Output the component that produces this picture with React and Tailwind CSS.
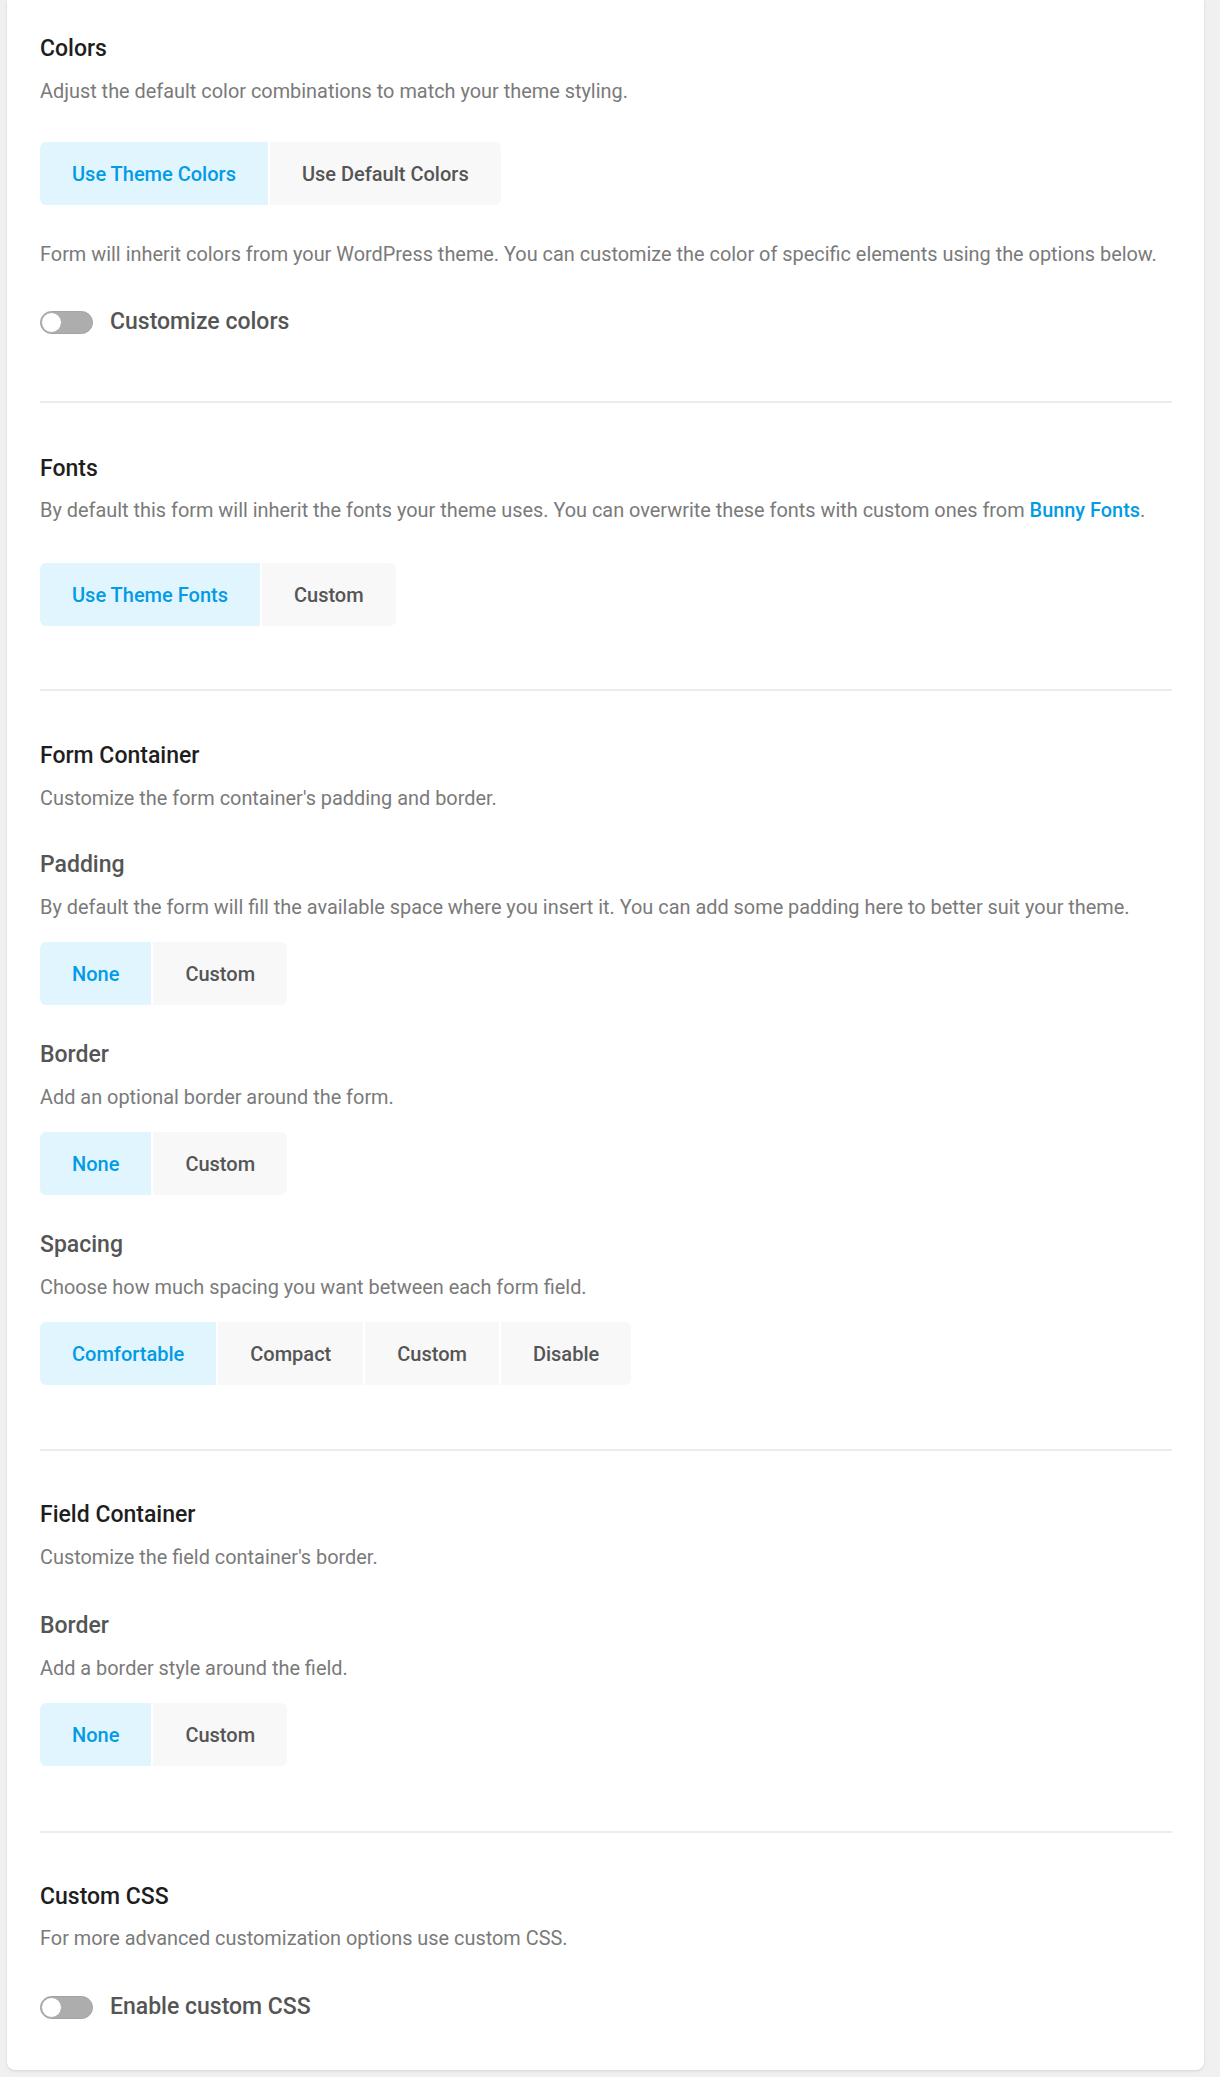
import React from "react";

const font = { fontFamily: "Roboto, 'Noto Sans', sans-serif" };

function Title({ children, className = "" }) {
  return (
    <h2 className={`text-[23px] leading-[30px] font-medium text-[#1e1e1e] ${className}`}>
      {children}
    </h2>
  );
}

function SubTitle({ children, className = "" }) {
  return (
    <h3 className={`text-[23px] leading-[30px] font-medium text-[#555555] ${className}`}>
      {children}
    </h3>
  );
}

function Desc({ children, className = "" }) {
  return (
    <p className={`text-[19.9px] leading-[30px] text-[#7a7a7a] ${className}`}>{children}</p>
  );
}

function ButtonGroup({ options, className = "" }) {
  return (
    <div className={`flex ${className}`}>
      <div className="inline-flex gap-[2px] rounded-md overflow-hidden bg-white">
        {options.map((o, i) => (
          <button
            key={o}
            className={`h-[63px] px-8 text-[20px] font-medium ${
              i === 0 ? "bg-[#e1f5fe] text-[#039be5]" : "bg-[#f8f8f8] text-[#555555]"
            }`}
          >
            {o}
          </button>
        ))}
      </div>
    </div>
  );
}

function Toggle({ label, className = "" }) {
  return (
    <div className={`flex items-center h-[30px] gap-[17px] ${className}`}>
      <div className="relative w-[53px] h-[23px] rounded-full bg-[#adadad] border border-[#a3a3a3]">
        <div className="absolute left-0 top-0 w-[21px] h-[21px] rounded-full bg-white border border-[#a8a8a8]" />
      </div>
      <span className="text-[23px] leading-[30px] font-medium text-[#555555]">{label}</span>
    </div>
  );
}

function Divider({ className = "" }) {
  return <div className={`h-[2px] bg-[#ececec] ${className}`} />;
}

export default function App() {
  return (
    <div className="min-h-[2077px] bg-[#f0f0f0] pb-[6px]" style={font}>
      <div className="ml-[7px] w-[1197px] bg-white rounded-b-lg shadow-[0_1px_3px_rgba(0,0,0,0.12)] pl-[33px] pr-[32px] pt-[34px] pb-[48px]">
        {/* Colors */}
        <Title>Colors</Title>
        <Desc className="mt-[13px]">Adjust the default color combinations to match your theme styling.</Desc>
        <ButtonGroup className="mt-[35px]" options={["Use Theme Colors", "Use Default Colors"]} />
        <Desc className="mt-[35px]">
          Form will inherit colors from your WordPress theme. You can customize the color of specific elements using the options below.
        </Desc>
        <Toggle className="mt-[37px]" label="Customize colors" />
        <Divider className="mt-[64px]" />

        {/* Fonts */}
        <Title className="mt-[51px]">Fonts</Title>
        <Desc className="mt-[12px]">
          By default this form will inherit the fonts your theme uses. You can overwrite these fonts with custom ones from{" "}
          <a className="text-[#039be5] font-medium">Bunny Fonts</a>.
        </Desc>
        <ButtonGroup className="mt-[37px]" options={["Use Theme Fonts", "Custom"]} />
        <Divider className="mt-[63px]" />

        {/* Form Container */}
        <Title className="mt-[50px]">Form Container</Title>
        <Desc className="mt-[13px]">Customize the form container's padding and border.</Desc>
        <SubTitle className="mt-[36px]">Padding</SubTitle>
        <Desc className="mt-[13px]">
          By default the form will fill the available space where you insert it. You can add some padding here to better suit your theme.
        </Desc>
        <ButtonGroup className="mt-[19px]" options={["None", "Custom"]} />
        <SubTitle className="mt-[35px]">Border</SubTitle>
        <Desc className="mt-[13px]">Add an optional border around the form.</Desc>
        <ButtonGroup className="mt-[19px]" options={["None", "Custom"]} />
        <SubTitle className="mt-[35px]">Spacing</SubTitle>
        <Desc className="mt-[13px]">Choose how much spacing you want between each form field.</Desc>
        <ButtonGroup className="mt-[19px]" options={["Comfortable", "Compact", "Custom", "Disable"]} />
        <Divider className="mt-[64px]" />

        {/* Field Container */}
        <Title className="mt-[49px]">Field Container</Title>
        <Desc className="mt-[13px]">Customize the field container's border.</Desc>
        <SubTitle className="mt-[38px]">Border</SubTitle>
        <Desc className="mt-[13px]">Add a border style around the field.</Desc>
        <ButtonGroup className="mt-[19px]" options={["None", "Custom"]} />
        <Divider className="mt-[65px]" />

        {/* Custom CSS */}
        <Title className="mt-[49px]">Custom CSS</Title>
        <Desc className="mt-[12px]">For more advanced customization options use custom CSS.</Desc>
        <Toggle className="mt-[38px]" label="Enable custom CSS" />
      </div>
    </div>
  );
}
